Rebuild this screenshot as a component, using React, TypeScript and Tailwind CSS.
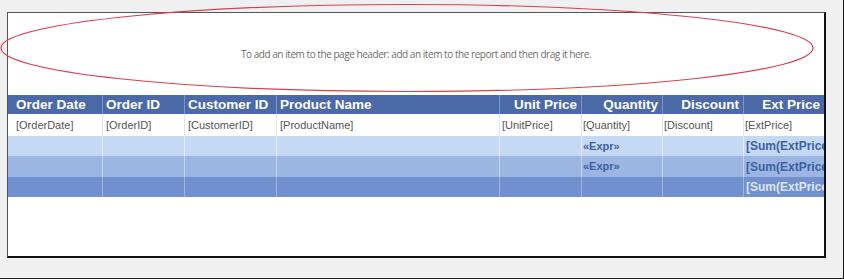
import React from "react";

const cols = [
  { w: 94, h: "Order Date", d: "[OrderDate]", right: false, pl: "pl-2" },
  { w: 82, h: "Order ID", d: "[OrderID]", right: false, pl: "pl-[3px]" },
  { w: 92, h: "Customer ID", d: "[CustomerID]", right: false, pl: "pl-[3px]" },
  { w: 223, h: "Product Name", d: "[ProductName]", right: false, pl: "pl-[3px]" },
  { w: 82, h: "Unit Price", d: "[UnitPrice]", right: true, pl: "pl-[2px]" },
  { w: 81, h: "Quantity", d: "[Quantity]", right: true, pl: "pl-[1px]" },
  { w: 81, h: "Discount", d: "[Discount]", right: true, pl: "pl-[1px]" },
  { w: 81, h: "Ext Price", d: "[ExtPrice]", right: true, pl: "pl-[1px]" },
];

const font = { fontFamily: '"Liberation Sans", Arial, sans-serif' };

function Row({
  bg,
  line,
  h,
  render,
}: {
  bg: string;
  line: string;
  h: string;
  render: (i: number) => React.ReactNode;
}) {
  return (
    <div className={`flex ${h} ${bg}`}>
      {cols.map((c, i) => (
        <div
          key={i}
          className={`shrink-0 overflow-hidden whitespace-nowrap flex items-center ${i > 0 ? `border-l ${line}` : ""}`}
          style={{ width: c.w }}
        >
          {render(i)}
        </div>
      ))}
    </div>
  );
}

export default function App() {
  return (
    <div
      className="relative w-[844px] h-[279px] bg-[#f0f0f0] border-r border-b border-[#1a1a1a] overflow-hidden"
      style={font}
    >
      <div className="ml-[7px] mt-[12px] w-[819px] h-[246px] bg-white border-l border-t border-[#555] border-r-2 border-b-2 border-r-[#111] border-b-[#111] flex flex-col">
        <div className="h-[82px] flex items-center justify-center">
          <span
            className="text-[10px] text-[#6e6e6e] tracking-[-0.45px]"
            style={{ fontFamily: '"Open Sans", "Liberation Sans", sans-serif' }}
          >
            To add an item to the page header: add an item to the report and then drag it here.
          </span>
        </div>
        <div className="flex flex-col">
          <Row
            bg="bg-[#4b69a7]"
            line="border-[#7d95c6]"
            h="h-[19px]"
            render={(i) => (
              <div
                className={`w-full text-[13.5px] font-bold text-white leading-none ${
                  cols[i].right ? "text-right pr-[4px]" : i === 0 ? "pl-2" : "pl-[3px]"
                }`}
              >
                {cols[i].h}
              </div>
            )}
          />
          <Row
            bg="bg-white"
            line="border-[#dfe5ef]"
            h="h-[22px]"
            render={(i) => (
              <div className={`w-full text-[11px] text-[#555] leading-none ${cols[i].pl}`}>{cols[i].d}</div>
            )}
          />
          <Row
            bg="bg-[#c6d9f4]"
            line="border-[#e4ecfa]"
            h="h-[20px]"
            render={(i) =>
              i === 5 ? (
                <div className="pl-[1px] text-[11px] font-bold text-[#3f5fa3]">«Expr»</div>
              ) : i === 7 ? (
                <div className="pl-[2px] text-[12px] font-bold text-[#3f5fa3]">[Sum(ExtPrice])</div>
              ) : null
            }
          />
          <Row
            bg="bg-[#9cb5e2]"
            line="border-[#c2d3ef]"
            h="h-[21px]"
            render={(i) =>
              i === 5 ? (
                <div className="pl-[1px] text-[11px] font-bold text-[#3f5fa3]">«Expr»</div>
              ) : i === 7 ? (
                <div className="pl-[2px] text-[12px] font-bold text-[#3f5fa3]">[Sum(ExtPrice])</div>
              ) : null
            }
          />
          <Row
            bg="bg-[#7190cd]"
            line="border-[#9fb4df]"
            h="h-[20px]"
            render={(i) =>
              i === 7 ? (
                <div className="pl-[2px] text-[12px] font-bold text-[#dbe5f7]">[Sum(ExtPrice])</div>
              ) : null
            }
          />
        </div>
      </div>
      <svg
        className="absolute left-0 top-0 pointer-events-none"
        width="844"
        height="279"
        viewBox="0 0 844 279"
      >
        <ellipse cx="407" cy="48" rx="406" ry="43.5" fill="none" stroke="#d8404f" strokeWidth="1.2" />
      </svg>
    </div>
  );
}
